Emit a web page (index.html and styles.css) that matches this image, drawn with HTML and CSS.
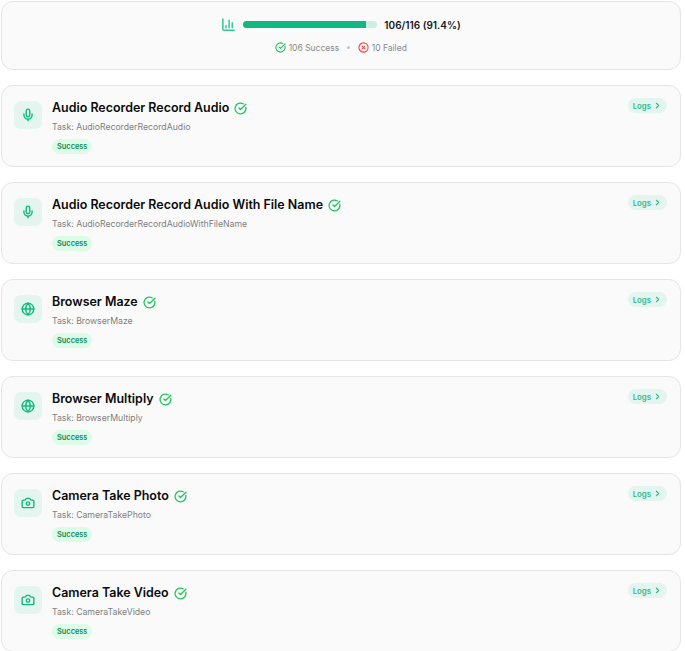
FILE: index.html
```html
<!DOCTYPE html>
<html lang="en">
  <head>
    <meta charset="UTF-8" />
    <meta name="viewport" content="width=device-width, initial-scale=1.0" />
    <title>Task Results</title>
    <link rel="stylesheet" href="styles.css">
  </head>
  <body>
    <svg class="icon-defs" width="0" height="0">
      <symbol id="i-check" viewBox="0 0 24 24"><path d="M21.801 10A10 10 0 1 1 17 3.335" /><path d="m9 11 3 3L22 4" /></symbol>
      <symbol id="i-x" viewBox="0 0 24 24"><circle cx="12" cy="12" r="10" /><path d="m15 9-6 6" /><path d="m9 9 6 6" /></symbol>
      <symbol id="i-mic" viewBox="0 0 24 24"><path d="M12 19v3" /><path d="M19 10v2a7 7 0 0 1-14 0v-2" /><rect x="9" y="2" width="6" height="13" rx="3" /></symbol>
      <symbol id="i-globe" viewBox="0 0 24 24"><circle cx="12" cy="12" r="10" /><path d="M12 2a14.5 14.5 0 0 0 0 20 14.5 14.5 0 0 0 0-20" /><path d="M2 12h20" /></symbol>
      <symbol id="i-camera" viewBox="0 0 24 24"><path d="M14.5 4h-5L7 7H4a2 2 0 0 0-2 2v9a2 2 0 0 0 2 2h16a2 2 0 0 0 2-2V9a2 2 0 0 0-2-2h-3l-2.5-3z" /><circle cx="12" cy="13" r="3" /></symbol>
      <symbol id="i-chevron" viewBox="0 0 24 24"><path d="m9 18 6-6-6-6" /></symbol>
      <symbol id="i-chart" viewBox="0 0 24 24"><path d="M3 3v16a2 2 0 0 0 2 2h16" /><path d="M18 17V9" /><path d="M13 17V5" /><path d="M8 17v-3" /></symbol>
    </svg>

    <div class="container">
      <div class="card summary">
        <div class="progress-row">
          <svg class="icon chart-icon"><use href="#i-chart" /></svg>
          <div class="progress-track"><div class="progress-fill" style="width: 91.4%"></div></div>
          <span class="progress-text">106/116 (91.4%)</span>
        </div>
        <div class="counts">
          <span class="count"><svg class="icon count-icon ok"><use href="#i-check" /></svg>106 Success</span>
          <span class="dot"></span>
          <span class="count"><svg class="icon count-icon bad"><use href="#i-x" /></svg>10 Failed</span>
        </div>
      </div>

      <div class="card task">
        <div class="task-icon"><svg class="icon"><use href="#i-mic" /></svg></div>
        <div class="task-body">
          <h3 class="task-title">Audio Recorder Record Audio <svg class="icon title-check"><use href="#i-check" /></svg></h3>
          <p class="task-name">Task: AudioRecorderRecordAudio</p>
          <span class="badge">Success</span>
        </div>
        <a class="logs" href="#">Logs <svg class="icon"><use href="#i-chevron" /></svg></a>
      </div>

      <div class="card task">
        <div class="task-icon"><svg class="icon"><use href="#i-mic" /></svg></div>
        <div class="task-body">
          <h3 class="task-title">Audio Recorder Record Audio With File Name <svg class="icon title-check"><use href="#i-check" /></svg></h3>
          <p class="task-name">Task: AudioRecorderRecordAudioWithFileName</p>
          <span class="badge">Success</span>
        </div>
        <a class="logs" href="#">Logs <svg class="icon"><use href="#i-chevron" /></svg></a>
      </div>

      <div class="card task">
        <div class="task-icon"><svg class="icon"><use href="#i-globe" /></svg></div>
        <div class="task-body">
          <h3 class="task-title">Browser Maze <svg class="icon title-check"><use href="#i-check" /></svg></h3>
          <p class="task-name">Task: BrowserMaze</p>
          <span class="badge">Success</span>
        </div>
        <a class="logs" href="#">Logs <svg class="icon"><use href="#i-chevron" /></svg></a>
      </div>

      <div class="card task">
        <div class="task-icon"><svg class="icon"><use href="#i-globe" /></svg></div>
        <div class="task-body">
          <h3 class="task-title">Browser Multiply <svg class="icon title-check"><use href="#i-check" /></svg></h3>
          <p class="task-name">Task: BrowserMultiply</p>
          <span class="badge">Success</span>
        </div>
        <a class="logs" href="#">Logs <svg class="icon"><use href="#i-chevron" /></svg></a>
      </div>

      <div class="card task">
        <div class="task-icon"><svg class="icon"><use href="#i-camera" /></svg></div>
        <div class="task-body">
          <h3 class="task-title">Camera Take Photo <svg class="icon title-check"><use href="#i-check" /></svg></h3>
          <p class="task-name">Task: CameraTakePhoto</p>
          <span class="badge">Success</span>
        </div>
        <a class="logs" href="#">Logs <svg class="icon"><use href="#i-chevron" /></svg></a>
      </div>

      <div class="card task">
        <div class="task-icon"><svg class="icon"><use href="#i-camera" /></svg></div>
        <div class="task-body">
          <h3 class="task-title">Camera Take Video <svg class="icon title-check"><use href="#i-check" /></svg></h3>
          <p class="task-name">Task: CameraTakeVideo</p>
          <span class="badge">Success</span>
        </div>
        <a class="logs" href="#">Logs <svg class="icon"><use href="#i-chevron" /></svg></a>
      </div>
    </div>
  </body>
</html>
```

FILE: styles.css
```css
html {
  overflow: hidden;
}
body {
  margin: 0;
  font-family: Inter, "Liberation Sans", sans-serif;
  background-color: #fff;
  color: #0a0a0a;
}
.icon-defs {
  position: absolute;
}
.icon {
  display: block;
  fill: none;
  stroke: currentColor;
  stroke-width: 2.4;
  stroke-linecap: round;
  stroke-linejoin: round;
}
.container {
  display: flex;
  flex-direction: column;
  gap: 15px;
  padding: 1px 4px 0 1px;
}
.card {
  background-color: #fafafa;
  border: 1px solid #e5e5e5;
  border-radius: 12px;
}
.summary {
  height: 69px;
  box-sizing: border-box;
  padding-top: 15px;
}
.progress-row {
  display: flex;
  align-items: center;
  justify-content: center;
  gap: 7px;
}
.chart-icon {
  width: 15px;
  height: 15px;
  color: #34c79a;
}
.progress-track {
  width: 134px;
  height: 7px;
  border-radius: 4px;
  background-color: #cdeee2;
  overflow: hidden;
}
.progress-fill {
  height: 100%;
  background-color: #10b981;
}
.progress-text {
  font-size: 10px;
  font-weight: 600;
  color: #171717;
}
.counts {
  display: flex;
  align-items: center;
  justify-content: center;
  gap: 7px;
  margin-top: 10px;
  font-size: 8.5px;
  color: #8a8a8a;
}
.count {
  display: flex;
  align-items: center;
  gap: 2.5px;
}
.count-icon {
  width: 11px;
  height: 11px;
}
.ok {
  color: #22c55e;
}
.bad {
  color: #ef4444;
}
.dot {
  width: 3px;
  height: 3px;
  margin: 0 1px;
  border-radius: 50%;
  background-color: #c4c4c4;
}
.task {
  display: flex;
  align-items: flex-start;
  gap: 10px;
  height: 82px;
  box-sizing: border-box;
  flex-shrink: 0;
  padding: 13px 13px 0 12px;
}
.task-icon {
  display: flex;
  align-items: center;
  justify-content: center;
  width: 28px;
  height: 28px;
  flex-shrink: 0;
  margin-top: 2px;
  border-radius: 7px;
  background-color: #e3f5ee;
  color: #10b981;
}
.task-icon .icon {
  width: 14px;
  height: 14px;
}
.task-body {
  flex: 1;
}
.task-title {
  display: flex;
  align-items: center;
  gap: 5px;
  margin: 0;
  font-size: 12.45px;
  line-height: 18px;
  font-weight: 600;
}
.title-check {
  width: 13px;
  height: 13px;
  color: #22c55e;
}
.task-name {
  margin: 3px 0 0;
  font-size: 8.7px;
  line-height: 14px;
  color: #808080;
}
.badge {
  display: block;
  width: fit-content;
  margin-top: 5px;
  padding: 0 5px;
  font-size: 7.4px;
  line-height: 15px;
  font-weight: 600;
  border-radius: 8px;
  background-color: #dcfce7;
  color: #0f8a5f;
}
.logs {
  display: flex;
  align-items: center;
  gap: 2px;
  margin-top: -1px;
  padding: 0 5px;
  height: 15px;
  border-radius: 8px;
  background-color: #e3f5ee;
  color: #34b98f;
  font-size: 7.8px;
  font-weight: 600;
  text-decoration: none;
}
.logs .icon {
  width: 9px;
  height: 9px;
  stroke-width: 3;
}
```
